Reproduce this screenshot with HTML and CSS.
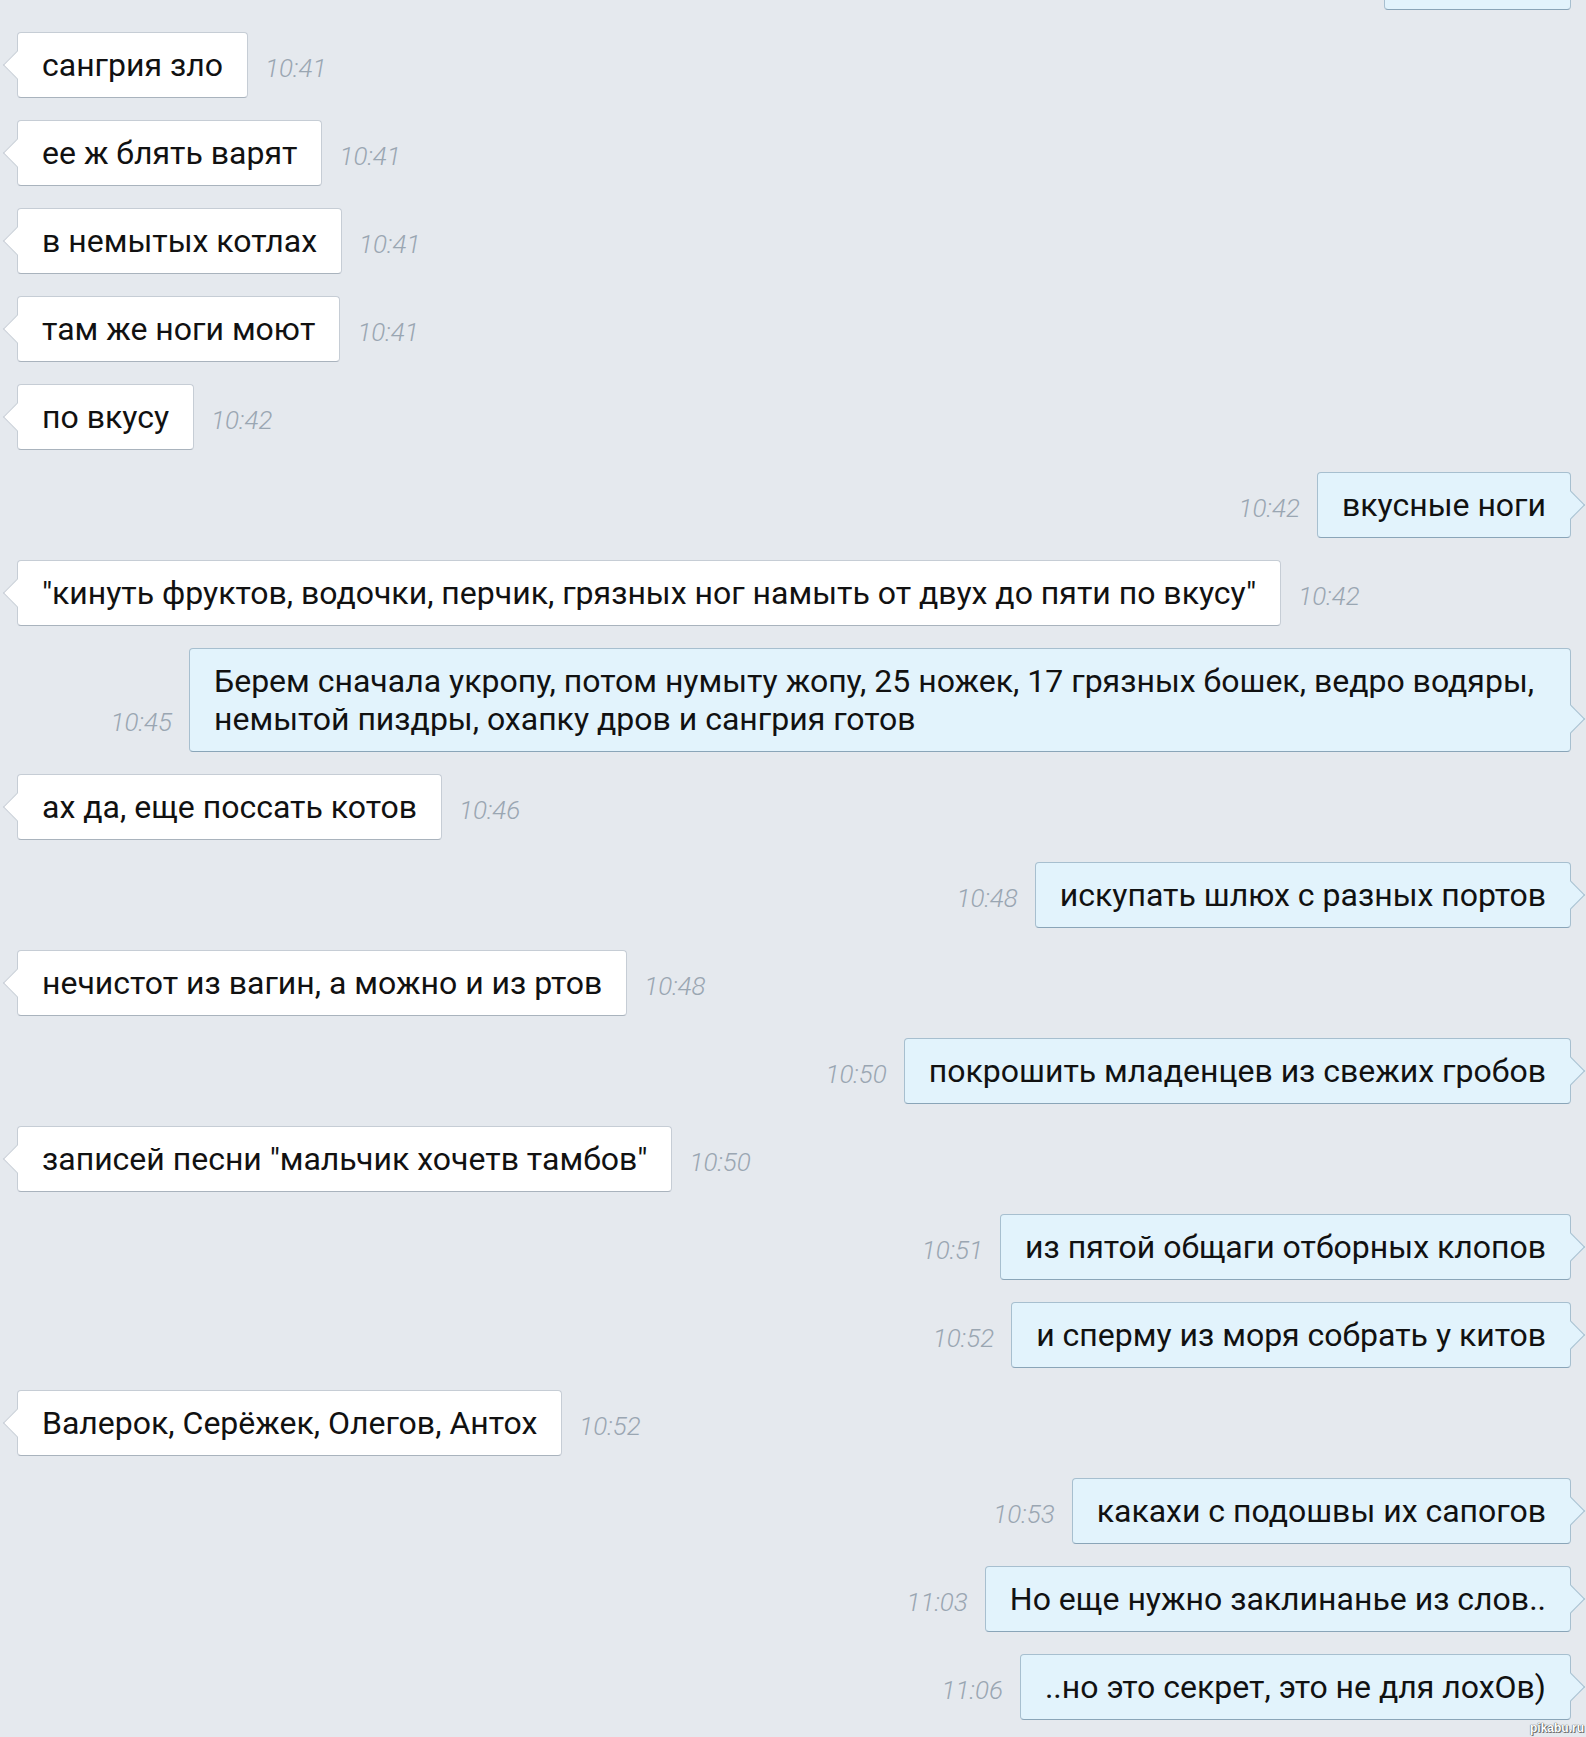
FILE: index.html
```html
<!DOCTYPE html>
<html lang="ru">
<head>
<meta charset="UTF-8">
<title>Сангрия</title>
<link rel="stylesheet" href="styles.css">
</head>
<body>
	<div class="chat">
		<div class="msg out"><span class="time">10:40</span><div class="bubble">да ладно</div></div>
		<div class="msg in"><div class="bubble">сангрия зло</div><span class="time">10:41</span></div>
		<div class="msg in"><div class="bubble">ее ж блять варят</div><span class="time">10:41</span></div>
		<div class="msg in"><div class="bubble">в немытых котлах</div><span class="time">10:41</span></div>
		<div class="msg in"><div class="bubble">там же ноги моют</div><span class="time">10:41</span></div>
		<div class="msg in"><div class="bubble">по вкусу</div><span class="time">10:42</span></div>
		<div class="msg out"><span class="time">10:42</span><div class="bubble">вкусные ноги</div></div>
		<div class="msg in"><div class="bubble">"кинуть фруктов, водочки, перчик, грязных ног намыть от двух до пяти по вкусу"</div><span class="time">10:42</span></div>
		<div class="msg out"><span class="time">10:45</span><div class="bubble">Берем сначала укропу, потом нумыту жопу, 25 ножек, 17 грязных бошек, ведро водяры, немытой пиздры, охапку дров и сангрия готов</div></div>
		<div class="msg in"><div class="bubble">ах да, еще поссать котов</div><span class="time">10:46</span></div>
		<div class="msg out"><span class="time">10:48</span><div class="bubble">искупать шлюх с разных портов</div></div>
		<div class="msg in"><div class="bubble">нечистот из вагин, а можно и из ртов</div><span class="time">10:48</span></div>
		<div class="msg out"><span class="time">10:50</span><div class="bubble">покрошить младенцев из свежих гробов</div></div>
		<div class="msg in"><div class="bubble">записей песни "мальчик хочетв тамбов"</div><span class="time">10:50</span></div>
		<div class="msg out"><span class="time">10:51</span><div class="bubble">из пятой общаги отборных клопов</div></div>
		<div class="msg out"><span class="time">10:52</span><div class="bubble">и сперму из моря собрать у китов</div></div>
		<div class="msg in"><div class="bubble">Валерок, Серёжек, Олегов, Антох</div><span class="time">10:52</span></div>
		<div class="msg out"><span class="time">10:53</span><div class="bubble">какахи с подошвы их сапогов</div></div>
		<div class="msg out"><span class="time">11:03</span><div class="bubble">Но еще нужно заклинанье из слов..</div></div>
		<div class="msg out"><span class="time">11:06</span><div class="bubble">..но это секрет, это не для лохОв)</div></div>
	</div>
	<div class="mark">pikabu.ru</div>
</body>
</html>
```
FILE: styles.css
```css
html,body{margin:0;padding:0;}
body{
	width:1586px;
	height:1737px;
	overflow:hidden;
	position:relative;
	background:#e5e9ee;
	font-family:Roboto,"Noto Sans",sans-serif;
	color:#111;
}
.chat{
	display:flex;
	flex-direction:column;
	gap:22px;
	padding:0 15px 0 17px;
	margin-top:-56px;
}
.msg{
	display:flex;
	align-items:flex-end;
	gap:17px;
}
.msg.out{justify-content:flex-end;}
.bubble{
	position:relative;
	max-width:1332px;
	font-size:32px;
	line-height:38px;
	padding:13px 24px;
	border:1px solid;
	border-radius:4px;
}
.bubble::before{
	content:'';
	position:absolute;
	width:20px;
	height:20px;
	bottom:22px;
	box-sizing:border-box;
	background:inherit;
	transform:rotate(45deg);
}
.in .bubble{
	background:#fff;
	border-color:#c6cdd5;
	border-bottom-color:#a9b3bd;
}
.in .bubble::before{
	left:-11px;
	border-left:1px solid #c6cdd5;
	border-bottom:1px solid #c6cdd5;
}
.out .bubble{
	background:#e2f3fc;
	border-color:#a7bfcf;
	border-bottom-color:#8aa5b8;
}
.out .bubble::before{
	right:-11px;
	border-top:1px solid #a7bfcf;
	border-right:1px solid #a7bfcf;
}
.time{
	font-size:26px;
	font-weight:300;
	font-style:italic;
	line-height:38px;
	padding-bottom:11px;
	color:#9aa6b2;
	white-space:nowrap;
}
.mark{
	position:absolute;
	right:2px;
	bottom:2px;
	font:bold 12px "Liberation Sans",sans-serif;
	color:#fff;
	text-shadow:0 0 1px #555,0 0 1px #555,1px 1px 0 #777;
}
```
